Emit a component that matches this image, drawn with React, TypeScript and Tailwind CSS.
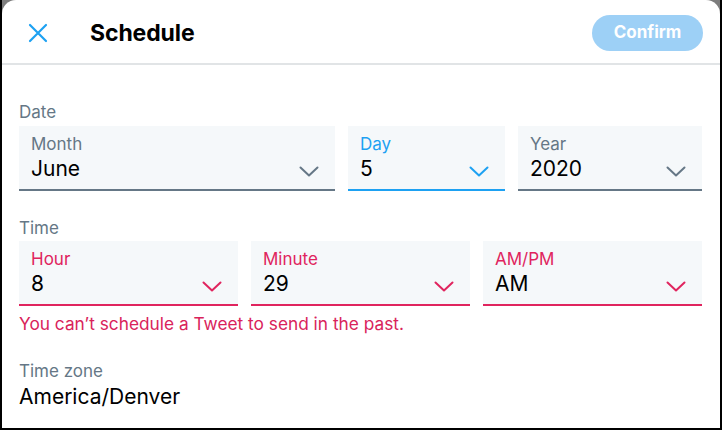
import React from "react";

const font = { fontFamily: "Inter, 'Noto Sans', sans-serif" };

function Chevron({ color }: { color: string }) {
  return (
    <svg width="20" height="11" viewBox="0 0 20 11" fill="none" className="shrink-0">
      <path d="M1.5 1.5 L10 9.5 L18.5 1.5" stroke={color} strokeWidth="2" strokeLinecap="round" strokeLinejoin="round" />
    </svg>
  );
}

function SelectBox({
  label,
  value,
  tone,
  className,
}: {
  label: string;
  value: string;
  tone: "gray" | "blue" | "red";
  className: string;
}) {
  const labelColor = tone === "blue" ? "text-[#1da1f2]" : tone === "red" ? "text-[#e0245e]" : "text-[#657786]";
  const border = tone === "blue" ? "border-[#1da1f2]" : tone === "red" ? "border-[#e0245e]" : "border-[#657786]";
  const chev = tone === "blue" ? "#1da1f2" : tone === "red" ? "#e0245e" : "#657786";
  return (
    <div className={`h-[65px] bg-[#f5f8fa] border-b-2 ${border} pl-[12px] pr-[16px] pt-[8px] flex items-end justify-between ${className}`}>
      <div className="flex flex-col h-full">
        <span className={`text-[17px] leading-[20px] ${labelColor}`}>{label}</span>
        <span className="text-[21px] leading-[26px] mt-[2px] text-black">{value}</span>
      </div>
      <div className="pb-[12px]">
        <Chevron color={chev} />
      </div>
    </div>
  );
}

export default function App() {
  return (
    <div className="w-[722px] h-[430px] bg-[#7d7d7d] border-x-2 border-b-2 border-black" style={font}>
      <div className="h-full bg-white rounded-t-[14px] flex flex-col">
        {/* header */}
        <div className="h-[65px] shrink-0 border-b-2 border-[#e1e4e6] flex items-center pl-[26px] pr-[17px] pt-[3px]">
          <svg width="20" height="20" viewBox="0 0 20 20" fill="none">
            <path d="M2 2 L18 18 M18 2 L2 18" stroke="#1da1f2" strokeWidth="2.2" strokeLinecap="round" />
          </svg>
          <h1 className="ml-[42px] text-[23px] font-bold text-black tracking-[-0.1px]">Schedule</h1>
          <button className="ml-auto w-[111px] h-[36px] rounded-full bg-[#9dd0f6] text-white text-[17px] font-bold">
            Confirm
          </button>
        </div>

        {/* body */}
        <div className="pl-[17px] pr-[18px] pt-[37px]">
          <div className="text-[17px] leading-[20px] text-[#657786] mb-[4px]">Date</div>
          <div className="flex gap-[13px]">
            <SelectBox label="Month" value="June" tone="gray" className="w-[316px]" />
            <SelectBox label="Day" value="5" tone="blue" className="w-[157px]" />
            <SelectBox label="Year" value="2020" tone="gray" className="flex-1" />
          </div>

          <div className="text-[17px] leading-[20px] text-[#657786] mt-[27px] mb-[3px]">Time</div>
          <div className="grid grid-cols-3 gap-[13px]">
            <SelectBox label="Hour" value="8" tone="red" className="" />
            <SelectBox label="Minute" value="29" tone="red" className="" />
            <SelectBox label="AM/PM" value="AM" tone="red" className="" />
          </div>
          <div className="text-[17.3px] leading-[22px] text-[#d9235b] mt-[7px]">
            You can’t schedule a Tweet to send in the past.
          </div>

          <div className="text-[17px] leading-[20px] text-[#657786] mt-[26px] mb-[3px]">Time zone</div>
          <div className="text-[21px] leading-[26px] text-black">America/Denver</div>
        </div>
      </div>
    </div>
  );
}
